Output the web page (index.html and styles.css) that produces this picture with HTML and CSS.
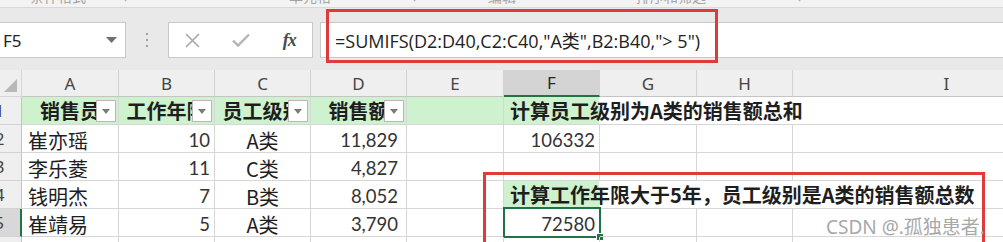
FILE: index.html
```html
<!DOCTYPE html>
<html>

<head>
    <meta charset="utf-8">
    <title>SUMIFS</title>
    <link rel="stylesheet" href="styles.css">
</head>

<body>
    <!-- bottom edge of the ribbon, mostly cut off -->
    <div class="ribbon-edge">
        <span class="frag frag-a">条件格式</span>
        <span class="frag frag-b">▾</span>
        <span class="frag frag-c">单元格</span>
        <span class="frag frag-d">▾</span>
        <span class="frag frag-e">编辑</span>
        <span class="frag frag-f">排序和筛选</span>
        <span class="frag frag-g">▾</span>
    </div>

    <!-- name box + formula bar -->
    <div class="fbar">
        <div class="namebox">
            <span>F5</span>
            <svg width="11" height="6" viewBox="0 0 11 6"><path d="M0 0h11L5.5 6z" fill="#707070"/></svg>
        </div>
        <div class="grip"><i></i><i></i><i></i></div>
        <div class="fbtns">
            <svg width="15" height="15" viewBox="0 0 15 15"><path d="M1 1l13 13M14 1L1 14" stroke="#a8a8a8" stroke-width="1.6" fill="none"/></svg>
            <svg width="18" height="14" viewBox="0 0 18 14"><path d="M1 7.5l5 5L17 1.5" stroke="#b4b4b4" stroke-width="2.4" fill="none"/></svg>
            <span class="fx">fx</span>
        </div>
        <div class="finput">=SUMIFS(D2:D40,C2:C40,"A类",B2:B40,"&gt; 5")</div>
    </div>

    <!-- the sheet -->
    <div class="sheet">
        <div class="c corner"><span class="tri"></span></div>
        <div class="c ch">A</div>
        <div class="c ch">B</div>
        <div class="c ch">C</div>
        <div class="c ch">D</div>
        <div class="c ch">E</div>
        <div class="c ch on">F</div>
        <div class="c ch">G</div>
        <div class="c ch">H</div>
        <div class="c ch">I</div>

        <div class="c rh">1</div>
        <div class="c g th">销售员<span class="dd"></span></div>
        <div class="c g th">工作年限<span class="dd"></span></div>
        <div class="c g th">员工级别<span class="dd"></span></div>
        <div class="c g th">销售额<span class="dd"></span></div>
        <div class="c g"></div>
        <div class="c wide note">计算员工级别为A类的销售额总和</div>

        <div class="c rh">2</div>
        <div class="c">崔亦瑶</div>
        <div class="c n">10</div>
        <div class="c mid">A类</div>
        <div class="c n fmt">11,829</div>
        <div class="c"></div>
        <div class="c n">106332</div>
        <div class="c"></div>
        <div class="c"></div>
        <div class="c"></div>

        <div class="c rh">3</div>
        <div class="c">李乐菱</div>
        <div class="c n">11</div>
        <div class="c mid">C类</div>
        <div class="c n fmt">4,827</div>
        <div class="c"></div>
        <div class="c"></div>
        <div class="c"></div>
        <div class="c"></div>
        <div class="c"></div>

        <div class="c rh">4</div>
        <div class="c">钱明杰</div>
        <div class="c n">7</div>
        <div class="c mid">B类</div>
        <div class="c n fmt">8,052</div>
        <div class="c"></div>
        <div class="c wide note">计算工作年限大于5年，员工级别是A类的销售额总数</div>

        <div class="c rh on">5</div>
        <div class="c">崔靖易</div>
        <div class="c n">5</div>
        <div class="c mid">A类</div>
        <div class="c n fmt">3,790</div>
        <div class="c"></div>
        <div class="c n sel">72580</div>
        <div class="c"></div>
        <div class="c"></div>
        <div class="c"></div>

        <div class="c rh">6</div>
        <div class="c"></div>
        <div class="c"></div>
        <div class="c"></div>
        <div class="c"></div>
        <div class="c"></div>
        <div class="c"></div>
        <div class="c"></div>
        <div class="c"></div>
        <div class="c"></div>
    </div>

    <!-- red annotation boxes -->
    <div class="callout callout-top"></div>
    <div class="callout callout-bottom"></div>

    <div class="mark">CSDN @.孤独患者.</div>
</body>

</html>
```

FILE: styles.css
```css
body {
    margin: 0;
    width: 1003px;
    height: 242px;
    overflow: hidden;
    position: relative;
    background-color: #e9e9e9;
    font-family: "Noto Sans", "Noto Sans CJK SC", sans-serif;
}

/* ribbon edge */
.ribbon-edge {
    height: 7px;
    background-color: #f3f3f3;
    border-bottom: 1px solid #d8d8d8;
    overflow: hidden;
    display: flex;
}

.frag {
    font-size: 14px;
    line-height: 14px;
    margin-top: -11px;
    color: #a4a4a4;
    font-family: "Noto Sans CJK SC", sans-serif;
}

.frag-a { margin-left: 30px; }
.frag-b { margin-left: 36px; }
.frag-c { margin-left: 160px; }
.frag-d { margin-left: 80px; }
.frag-e { margin-left: 70px; }
.frag-f { margin-left: 120px; }
.frag-g { margin-left: 90px; }

/* formula bar */
.fbar {
    display: flex;
    height: 36px;
    margin-top: 14px;
}

.namebox {
    width: 127px;
    margin-left: -1px;
    box-sizing: border-box;
    background-color: #fff;
    border: 1px solid #c9c9c9;
    display: flex;
    align-items: center;
    justify-content: space-between;
    padding: 0 8px 0 3px;
    font-size: 17px;
    color: #222;
}

.grip {
    width: 42px;
    display: flex;
    flex-direction: column;
    align-items: center;
    justify-content: center;
    gap: 4px;
}

.grip i {
    width: 2px;
    height: 2px;
    background-color: #a0a0a0;
}

.fbtns {
    width: 145px;
    box-sizing: border-box;
    background-color: #fff;
    border: 1px solid #c9c9c9;
    display: flex;
    align-items: center;
    justify-content: space-around;
}

.fx {
    font-family: "Liberation Serif", serif;
    font-style: italic;
    font-weight: bold;
    font-size: 18px;
    color: #4a4a4a;
    letter-spacing: -1px;
}

.finput {
    flex: 1;
    margin-left: 7px;
    background-color: #fff;
    border: 1px solid #c9c9c9;
    border-right: none;
    padding-left: 14px;
    display: flex;
    align-items: center;
    font-family: "Open Sans", "Noto Sans CJK SC", sans-serif;
    font-size: 18px;
    color: #222;
}

/* sheet grid */
.sheet {
    display: grid;
    grid-template-columns: 44px 97px 96px 96px 96px 97px 96px 97px 96px 308px;
    grid-template-rows: 27px repeat(6, 28px);
    margin-top: 12px;
    margin-left: -22px;
    background-color: #fff;
}

.c {
    position: relative;
    box-sizing: border-box;
    border-right: 1px solid #d6d6d6;
    border-bottom: 1px solid #d6d6d6;
    display: flex;
    align-items: center;
    padding: 4px 4px 0 6px;
    font-family: "Noto Sans CJK SC", sans-serif;
    font-size: 20px;
    line-height: 1;
    color: #1e1e1e;
    white-space: nowrap;
    overflow: hidden;
}

.corner,
.ch,
.rh {
    background-color: #efefef;
    font-family: "Noto Sans", sans-serif;
    font-size: 17px;
    color: #444;
    padding: 0;
}

.ch {
    justify-content: center;
    border-right-color: #d2d2d2;
    border-bottom-color: #c4c4c4;
}

.ch.on {
    background-color: #d4d4d4;
    border-bottom: 2px solid #217346;
    color: #262626;
}

.rh {
    justify-content: center;
    border-right-color: #c4c4c4;
    border-bottom-color: #d2d2d2;
}

.rh.on {
    background-color: #d8d8d8;
    border-right: 2px solid #217346;
}

.corner {
    justify-content: flex-end;
    align-items: flex-end;
    padding: 0 4px 4px 0;
}

.tri {
    width: 0;
    height: 0;
    border-left: 13px solid transparent;
    border-bottom: 13px solid #b8b8b8;
}

.g {
    background-color: #cdf2cd;
}

.th {
    justify-content: center;
    font-weight: bold;
    padding: 0;
}

.dd {
    position: absolute;
    right: 2px;
    top: 3px;
    width: 20px;
    height: 22px;
    box-sizing: border-box;
    background-color: #fff;
    border: 1px solid #b8b8b8;
}

.dd::after {
    content: "";
    position: absolute;
    left: 5px;
    top: 8px;
    border-left: 4.5px solid transparent;
    border-right: 4.5px solid transparent;
    border-top: 5px solid #7a7a7a;
}

.wide {
    grid-column: span 4;
}

.note {
    font-weight: bold;
    padding: 0 0 0 6px;
    background: linear-gradient(to right, #cdf2cd 95px, #fff 95px);
    overflow: visible;
}

.n {
    justify-content: flex-end;
    font-family: Lato, sans-serif;
    font-size: 18.5px;
    color: #333;
    padding-right: 4px;
}

.fmt {
    padding-right: 8px;
}

.mid {
    justify-content: center;
    padding-left: 4px;
}

.sel {
    overflow: visible;
}

.sel::before {
    content: "";
    position: absolute;
    left: -1px;
    top: -2px;
    right: -2px;
    bottom: -2px;
    border: 2px solid #217346;
}

.sel::after {
    content: "";
    position: absolute;
    right: -5px;
    bottom: -5px;
    width: 6px;
    height: 6px;
    background-color: #217346;
    border: 1px solid #fff;
}

/* annotations */
.callout {
    position: absolute;
    box-sizing: border-box;
    border: 3px solid #e03b3b;
}

.callout-top {
    left: 326px;
    top: 9px;
    width: 392px;
    height: 54px;
}

.callout-bottom {
    left: 483px;
    top: 172px;
    width: 502px;
    height: 90px;
}

.mark {
    position: absolute;
    left: 826px;
    top: 212px;
    font-size: 19px;
    color: #a8a8a8;
}
```
